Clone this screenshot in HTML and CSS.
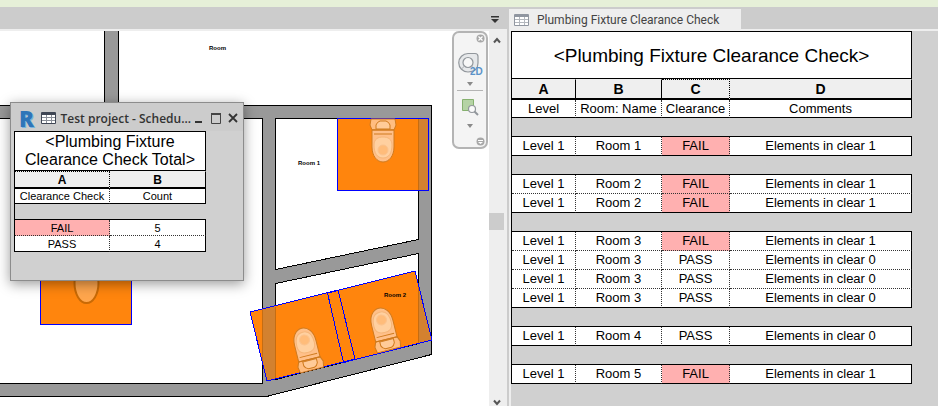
FILE: index.html
```html
<!DOCTYPE html>
<html lang="en">
<head>
<meta charset="utf-8">
<title>Plumbing Fixture Clearance Check</title>
<link rel="stylesheet" href="styles.css">
</head>
<body>
<div class="app">
  <div class="ribbon-edge"></div>
  <main class="workspace">
    <section class="view">
      <header class="tabs tabs-left">
        <button class="icon-btn tab-menu" aria-label="Open views"><svg width="8" height="7" viewBox="0 0 8 7"><path d="M0 0h8v1.500H0zM0 3h8L4 7z" fill="#333"/></svg></button>
      </header>
      <div class="view-body">
        <div class="canvas">
          <svg class="plan" viewBox="0 31 489 375" preserveAspectRatio="xMinYMin slice">
            <defs>
              <g id="toilet" stroke="#cf7a1e" stroke-width="1">
                <path d="M-12 0h24l1 6-2 5h-22l-2-5z" fill="#ffbd80"/>
                <path d="M-7 10v-4q1-3 4-4h6q3 1 4 4v4z" fill="#ffcb99"/>
                <path d="M-11 11h22v17c0 9-5 15-11 15s-11-6-11-15z" fill="#ffc08a"/>
                <path d="M-11 11h22M-9 15h18" fill="none"/>
                <path d="M-9 26c0-6 4-8 9-8s9 2 9 8c0 8-3 13-9 13s-9-5-9-13z" fill="#ffd0a0" stroke="#f5b67a"/>
                <circle cx="0" cy="31" r="5" fill="#ffbc7a" stroke="#fbc28d"/>
              </g>
            </defs>
            <g shape-rendering="crispEdges">
              <path class="wall" d="M-2 105.500H104.500V20H118.500V105.500H431.500V354.500L266.500 396.500H-2V383.500H262.500V118.500H-2z"/>
              <path class="room" d="M275.500 118.500H418.500V239.500L275.500 269.500z"/>
              <path class="room" d="M275.500 283.500L418.500 253.500V343.500L275.500 379.500z"/>
              <path class="clear" d="M337.500 118.500h91v72h-91z"/>
              <path class="clear-wall" d="M418 119h10v71h-10z"/>
              <path class="hidden-edge" d="M418.500 119v71"/>
              <path class="clear" d="M40.500 252.500h91v72h-91z"/>
              <path class="clear" d="M250 312L338 290L355 359L267 381z"/>
              <path class="clear" d="M327.500 293L415 271L432 340L343.500 362.500z"/>
              <path class="clear-wall" d="M262 309L275 306V379L267 381L262 361z"/>
              <path class="clear-wall" d="M418 283L432 340L418 343.500z"/>
              <path class="hidden-edge" d="M262.500 310v51M275.500 307v72M418.500 284v59"/>
              <path class="outline" d="M250 312L338 290L355 359L267 381zM327.500 293L415 271L432 340L343.500 362.500z"/>
            </g>
            <use href="#toilet" transform="translate(383 119)"/>
            <use href="#toilet" transform="translate(312 370) rotate(166)"/>
            <use href="#toilet" transform="translate(389 350) rotate(166)"/>
            <ellipse cx="86.500" cy="283" rx="12" ry="20" fill="#ffa64d" stroke="#c96a05" stroke-width="2"/>
            <g class="room-tag">
              <text x="209" y="50">Room</text>
              <text x="298" y="165">Room 1</text>
              <text x="384" y="297">Room 2</text>
            </g>
          </svg>
          <nav class="navbar" aria-label="Navigation">
            <button class="icon-btn end" aria-label="Close"><svg width="9" height="9" viewBox="0 0 9 9"><circle cx="4.500" cy="4.500" r="4" fill="#a8a8a8"/><path d="M2.500 2.500l4 4M6.500 2.500l-4 4" stroke="#fff" stroke-width="1.200"/></svg></button>
            <button class="icon-btn" aria-label="2D steering wheel"><svg width="26" height="24" viewBox="0 0 26 24"><path d="M11 1.500h7q3 0 3 3V11q0 9-10 9a9.200 9.200 0 1 1 0-18.500z" fill="#e6e8ea" stroke="#92979c" stroke-width="1.200"/><circle cx="11" cy="10.500" r="5" fill="#f7f7f7" stroke="#92979c" stroke-width="1.200"/><path d="M4.500 17l3-3M14.500 14l3 3" stroke="#a9adb1"/><text class="badge" x="13" y="23">2D</text></svg></button>
            <button class="icon-btn caret" aria-label="Wheel options"><svg width="6" height="4" viewBox="0 0 6 4"><path d="M0 0h6L3 4z" fill="#8a8a8a"/></svg></button>
            <hr>
            <button class="icon-btn" aria-label="Zoom region"><svg width="18" height="18" viewBox="0 0 18 18"><path d="M1.500 1.500h11v11h-11z" fill="#b5d3a5" stroke="#86b16f"/><circle cx="11" cy="11" r="3.500" fill="#fafafa" stroke="#92979c" stroke-width="1.200"/><path d="M13.500 13.500l3.500 3.500" stroke="#92979c" stroke-width="2"/></svg></button>
            <button class="icon-btn caret far" aria-label="Zoom options"><svg width="6" height="4" viewBox="0 0 6 4"><path d="M0 0h6L3 4z" fill="#8a8a8a"/></svg></button>
            <button class="icon-btn end last" aria-label="Customize"><svg width="9" height="9" viewBox="0 0 9 9"><circle cx="4.500" cy="4.500" r="4" fill="#a8a8a8"/><path d="M2 3h5v1H2zM2 5h5L4.500 7z" fill="#fff"/></svg></button>
          </nav>
        </div>
        <div class="scrollbar">
          <button class="icon-btn" aria-label="Scroll up"><svg width="8" height="7" viewBox="0 0 8 7"><path d="M1 5.500l3-3.500 3 3.500" fill="none" stroke="#555" stroke-width="2"/></svg></button>
          <div class="track"><div class="thumb"></div></div>
          <button class="icon-btn" aria-label="Scroll down"><svg width="8" height="7" viewBox="0 0 8 7"><path d="M1 1.500l3 3.500 3-3.500" fill="none" stroke="#555" stroke-width="2"/></svg></button>
        </div>
      </div>
    </section>

    <section class="sheet">
      <header class="tabs">
        <button class="tab"><svg width="15" height="12" viewBox="0 0 15 12"><path d="M.5.500h14v11H.5z" fill="#fff" stroke="#9096a0"/><path d="M1 1h13v2H1z" fill="#9096a0"/><path d="M1 5.500h13M1 8.500h13M5.500 3v8M10.500 3v8" stroke="#b4b8be"/></svg>Plumbing Fixture Clearance Check</button>
      </header>
      <div class="sheet-body">
        <table class="schedule">
          <colgroup><col class="c-level"><col class="c-room"><col class="c-clear"><col class="c-comments"></colgroup>
          <thead>
            <tr class="title"><th colspan="4">&lt;Plumbing Fixture Clearance Check&gt;</th></tr>
            <tr class="letters"><th>A</th><th>B</th><th class="picked">C</th><th>D</th></tr>
            <tr class="names"><th>Level</th><th>Room: Name</th><th>Clearance</th><th>Comments</th></tr>
          </thead>
          <tbody>
            <tr class="gap"><td colspan="4"></td></tr>
            <tr class="end"><td>Level 1</td><td>Room 1</td><td class="fail">FAIL</td><td>Elements in clear 1</td></tr>
            <tr class="gap"><td colspan="4"></td></tr>
            <tr><td>Level 1</td><td>Room 2</td><td class="fail">FAIL</td><td>Elements in clear 1</td></tr>
            <tr class="end"><td>Level 1</td><td>Room 2</td><td class="fail">FAIL</td><td>Elements in clear 1</td></tr>
            <tr class="gap"><td colspan="4"></td></tr>
            <tr><td>Level 1</td><td>Room 3</td><td class="fail">FAIL</td><td>Elements in clear 1</td></tr>
            <tr><td>Level 1</td><td>Room 3</td><td>PASS</td><td>Elements in clear 0</td></tr>
            <tr><td>Level 1</td><td>Room 3</td><td>PASS</td><td>Elements in clear 0</td></tr>
            <tr class="end"><td>Level 1</td><td>Room 3</td><td>PASS</td><td>Elements in clear 0</td></tr>
            <tr class="gap"><td colspan="4"></td></tr>
            <tr class="end"><td>Level 1</td><td>Room 4</td><td>PASS</td><td>Elements in clear 0</td></tr>
            <tr class="gap"><td colspan="4"></td></tr>
            <tr class="end"><td>Level 1</td><td>Room 5</td><td class="fail">FAIL</td><td>Elements in clear 1</td></tr>
          </tbody>
        </table>
      </div>
    </section>
  </main>

  <section class="window">
    <header class="titlebar">
      <span class="logo">R</span>
      <svg width="15" height="12" viewBox="0 0 15 12"><path d="M.5.500h14v11H.5z" fill="#fff" stroke="#3f4654"/><path d="M1 1h13v2H1z" fill="#3f4654"/><path d="M1 5.500h13M1 8.500h13M5.500 3v8M10.500 3v8" stroke="#8a8f98"/></svg>
      <span class="caption">Test project - Schedu...</span>
      <button class="icon-btn" aria-label="Minimize"><svg width="12" height="11" viewBox="0 0 12 11"><path d="M2 8h7v2H2z" fill="#333"/></svg></button>
      <button class="icon-btn" aria-label="Maximize"><svg width="12" height="11" viewBox="0 0 12 11"><path d="M1.500 1v9.500h9V1" fill="none" stroke="#444"/><path d="M1 0h10v2H1z" fill="#444"/></svg></button>
      <button class="icon-btn close" aria-label="Close window"><svg width="10" height="10" viewBox="0 0 10 10"><path d="M1 1l8 8M9 1l-8 8" stroke="#333" stroke-width="1.800"/></svg></button>
    </header>
    <table class="schedule compact">
      <colgroup><col class="c-check"><col class="c-count"></colgroup>
      <thead>
        <tr class="title"><th colspan="2">&lt;Plumbing Fixture<br>Clearance Check Total&gt;</th></tr>
        <tr class="letters"><th class="picked">A</th><th>B</th></tr>
        <tr class="names"><th>Clearance Check</th><th>Count</th></tr>
      </thead>
      <tbody>
        <tr class="gap"><td colspan="2"></td></tr>
        <tr><td class="fail">FAIL</td><td>5</td></tr>
        <tr class="end"><td>PASS</td><td>4</td></tr>
      </tbody>
    </table>
  </section>
</div>
</body>
</html>
```
FILE: styles.css
```css
* { box-sizing: border-box; }
body { margin: 0; font-family: "Liberation Sans", Arial, sans-serif; color: #000; }
button { font: inherit; color: inherit; }
svg { display: block; flex: none; }

.app { position: relative; display: flex; flex-direction: column; height: 100vh; min-height: 400px; overflow: hidden; background: #ccc; }
.ribbon-edge { flex: none; height: 7px; background: #e6f0d8; }
.workspace { flex: 1; display: flex; min-height: 0; }
.icon-btn { display: flex; align-items: center; justify-content: center; padding: 0; border: 0; background: none; }

.tabs { display: flex; align-items: flex-end; flex: none; height: 24px; border-bottom: 2px solid #eee; background: #ccc; }
.tabs-left { justify-content: flex-end; height: 22px; border: 0; }
.tab-menu { width: 24px; height: 20px; }
.tab { display: flex; align-items: center; gap: 8px; height: 20px; padding: 2px 22px 0 5px; border: 0; background: #eee; color: #444; font-family: Roboto, "Open Sans", sans-serif; font-size: 12px; white-space: nowrap; }

.view { flex: 1; display: flex; flex-direction: column; min-width: 0; border-right: 2px solid #ccc; }
.view-body { flex: 1; display: flex; min-height: 0; background: #eee; }
.canvas { position: relative; flex: 1; min-width: 0; margin-top: 2px; background: #fff; }
.plan { width: 100%; height: 100%; }
.wall { fill: #999; stroke: #000; }
.room { fill: #fff; stroke: #000; }
.clear { fill: #ff850d; stroke: #00f; }
.outline { fill: none; stroke: #00f; }
.clear-wall { fill: #d3812f; }
.hidden-edge { fill: none; stroke: #c56c12; }
.room-tag { font-size: 6px; font-weight: 700; }

.scrollbar { display: flex; flex-direction: column; align-items: flex-start; flex: none; width: 18px; background: #eee; }
.scrollbar .icon-btn { width: 15px; height: 22px; }
.scrollbar .icon-btn:last-child { height: 7px; }
.track { display: flex; flex: 1; align-items: center; padding-bottom: 8px; }
.thumb { width: 15px; height: 17px; background: #ccc; }

.navbar { position: absolute; top: 0; right: 1px; display: flex; flex-direction: column; align-items: center; width: 36px; height: 118px; padding: 1px; border: 2px solid #b4b4b4; border-radius: 7px; background: #f4f4f4; }
.navbar hr { width: 26px; margin: 4px 0 7px; border: 0; border-top: 1px solid #b4b4b4; }
.navbar .end { align-self: flex-end; margin-bottom: 9px; }
.navbar .last { margin: auto 0 0; }
.navbar .caret { margin-top: 6px; }
.navbar .far { margin-top: 8px; }
.badge { fill: #5b93c9; font-size: 10px; font-weight: 700; }

.sheet { flex: none; width: 429px; display: flex; flex-direction: column; }
.sheet-body { flex: 1; min-height: 0; border-left: 2px solid #eee; background: #d0d0d0; }

.schedule { border-collapse: separate; border-spacing: 0; table-layout: fixed; width: 401px; border-left: 1px solid #000; font-size: 13px; text-align: center; }
.c-level { width: 64px; }
.c-room { width: 86px; }
.c-clear { width: 68px; }
.c-comments { width: 182px; }
.schedule th, .schedule td { height: 19px; padding: 0; border: 0 dotted #333; border-width: 0 1px 1px 0; background: #fff; font-weight: 400; line-height: 16px; white-space: nowrap; }
.schedule .title th { height: 48px; padding-top: 2px; border: 1px solid #000; border-left: 0; font-size: 19px; }
.schedule .letters th { height: 21px; border: solid #000; border-width: 1px 1px 2px 0; border-top-color: #eee; background: #efefef; font-size: 14px; font-weight: 700; }
.schedule .letters .picked { border-top: 1px dotted #000; border-right-style: dotted; }
.schedule .names th { height: 18px; border-bottom: 1px solid #000; }
.schedule .end td { border-bottom: 1px solid #000; }
.schedule tr > :last-child { border-right: 1px solid #000; }
.schedule .gap td { border-right: 0; border-bottom: 1px solid #000; background: #d0d0d0; }
.schedule .fail { background: #ffb0b0; }

.window { position: absolute; left: 10px; top: 102px; width: 234px; height: 179px; padding: 0 3px; border: 1px solid #8c8c8c; background: #d0d0d0; box-shadow: 0 3px 12px rgba(0, 0, 0, .4); }
.titlebar { display: flex; align-items: center; height: 28px; margin: 0 -3px; padding: 2px 2px 0 8px; background: #ccc; color: #333; }
.logo { width: 22px; color: #2f75b8; font-family: "Open Sans", sans-serif; font-size: 22px; font-weight: 800; line-height: 24px; text-shadow: 1px 1px 0 #78b4dc; }
.caption { flex: 1; margin-left: 5px; font-family: "Open Sans", sans-serif; font-size: 12px; font-weight: 600; white-space: nowrap; }
.titlebar .icon-btn { width: 17px; }

.compact { width: 192px; font-size: 11px; }
.c-check { width: 95px; }
.c-count { width: 96px; }
.compact th, .compact td { height: 16px; line-height: 14px; }
.compact .title th { height: 40px; padding: 0; font-size: 16px; line-height: 18px; }
.compact .letters th { height: 18px; font-size: 12px; }
.compact .names th { height: 15px; }
```
